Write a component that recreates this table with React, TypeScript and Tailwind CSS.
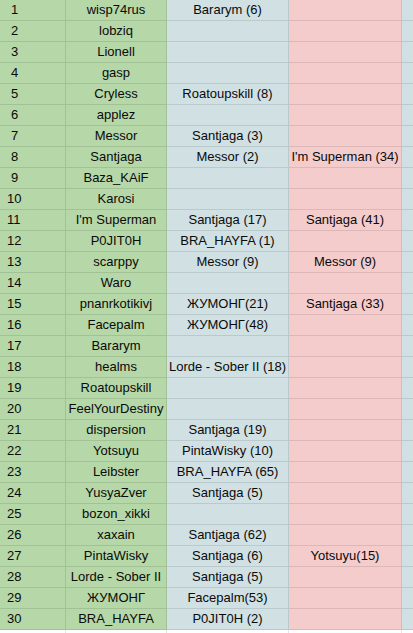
import React from "react";

const rows: [string, string, string][] = [
  ["wisp74rus", "Bararym (6)", ""],
  ["lobziq", "", ""],
  ["Lionell", "", ""],
  ["gasp", "", ""],
  ["Cryless", "Roatoupskill (8)", ""],
  ["applez", "", ""],
  ["Messor", "Santjaga (3)", ""],
  ["Santjaga", "Messor (2)", "I'm Superman (34)"],
  ["Baza_KAiF", "", ""],
  ["Karosi", "", ""],
  ["I'm Superman", "Santjaga (17)", "Santjaga (41)"],
  ["P0JIT0H", "BRA_HAYFA (1)", ""],
  ["scarppy", "Messor (9)", "Messor (9)"],
  ["Waro", "", ""],
  ["pnanrkotikivj", "ЖУМОНГ(21)", "Santjaga (33)"],
  ["Facepalm", "ЖУМОНГ(48)", ""],
  ["Bararym", "", ""],
  ["healms", "Lorde - Sober II (18)", ""],
  ["Roatoupskill", "", ""],
  ["FeelYourDestiny", "", ""],
  ["dispersion", "Santjaga (19)", ""],
  ["Yotsuyu", "PintaWisky (10)", ""],
  ["Leibster", "BRA_HAYFA (65)", ""],
  ["YusyaZver", "Santjaga (5)", ""],
  ["bozon_xikki", "", ""],
  ["xaxain", "Santjaga (62)", ""],
  ["PintaWisky", "Santjaga (6)", "Yotsuyu(15)"],
  ["Lorde - Sober II", "Santjaga (5)", ""],
  ["ЖУМОНГ", "Facepalm(53)", ""],
  ["BRA_HAYFA", "P0JIT0H (2)", ""],
];

export default function App() {
  return (
    <div
      className="w-[413px] h-[633px] overflow-hidden bg-white text-[13px] text-[#0a0a0a]"
      style={{ fontFamily: '"Liberation Sans", Arial, sans-serif' }}
    >
      <div className="grid grid-cols-[66px_101px_122px_113px_1fr]">
        {rows.map((r, i) => (
          <React.Fragment key={i}>
            <div
              className={
                "h-[21px] leading-[20px] bg-[#b6d7a8] border-r border-b border-black/10 whitespace-nowrap overflow-hidden " +
                (i < 9 ? "pl-[11px]" : "pl-[7px]")
              }
            >
              {i + 1}
            </div>
            <div className="h-[21px] leading-[20px] text-center bg-[#b6d7a8] border-r border-b border-black/10 whitespace-nowrap overflow-hidden">
              {r[0]}
            </div>
            <div className="h-[21px] leading-[20px] text-center bg-[#d0e0e3] border-r border-b border-black/10 whitespace-nowrap overflow-hidden">
              {r[1]}
            </div>
            <div className="h-[21px] leading-[20px] text-center bg-[#f4cccc] border-r border-b border-black/10 whitespace-nowrap overflow-hidden">
              {r[2]}
            </div>
            <div className="h-[21px] bg-[#d0e0e3] border-b border-black/10"></div>
          </React.Fragment>
        ))}
        <div className="h-[10px] border-r border-[#e2e3e3]"></div>
        <div className="h-[10px] border-r border-[#e2e3e3]"></div>
        <div className="h-[10px] border-r border-[#e2e3e3]"></div>
        <div className="h-[10px] border-r border-[#e2e3e3]"></div>
        <div className="h-[10px]"></div>
      </div>
    </div>
  );
}
